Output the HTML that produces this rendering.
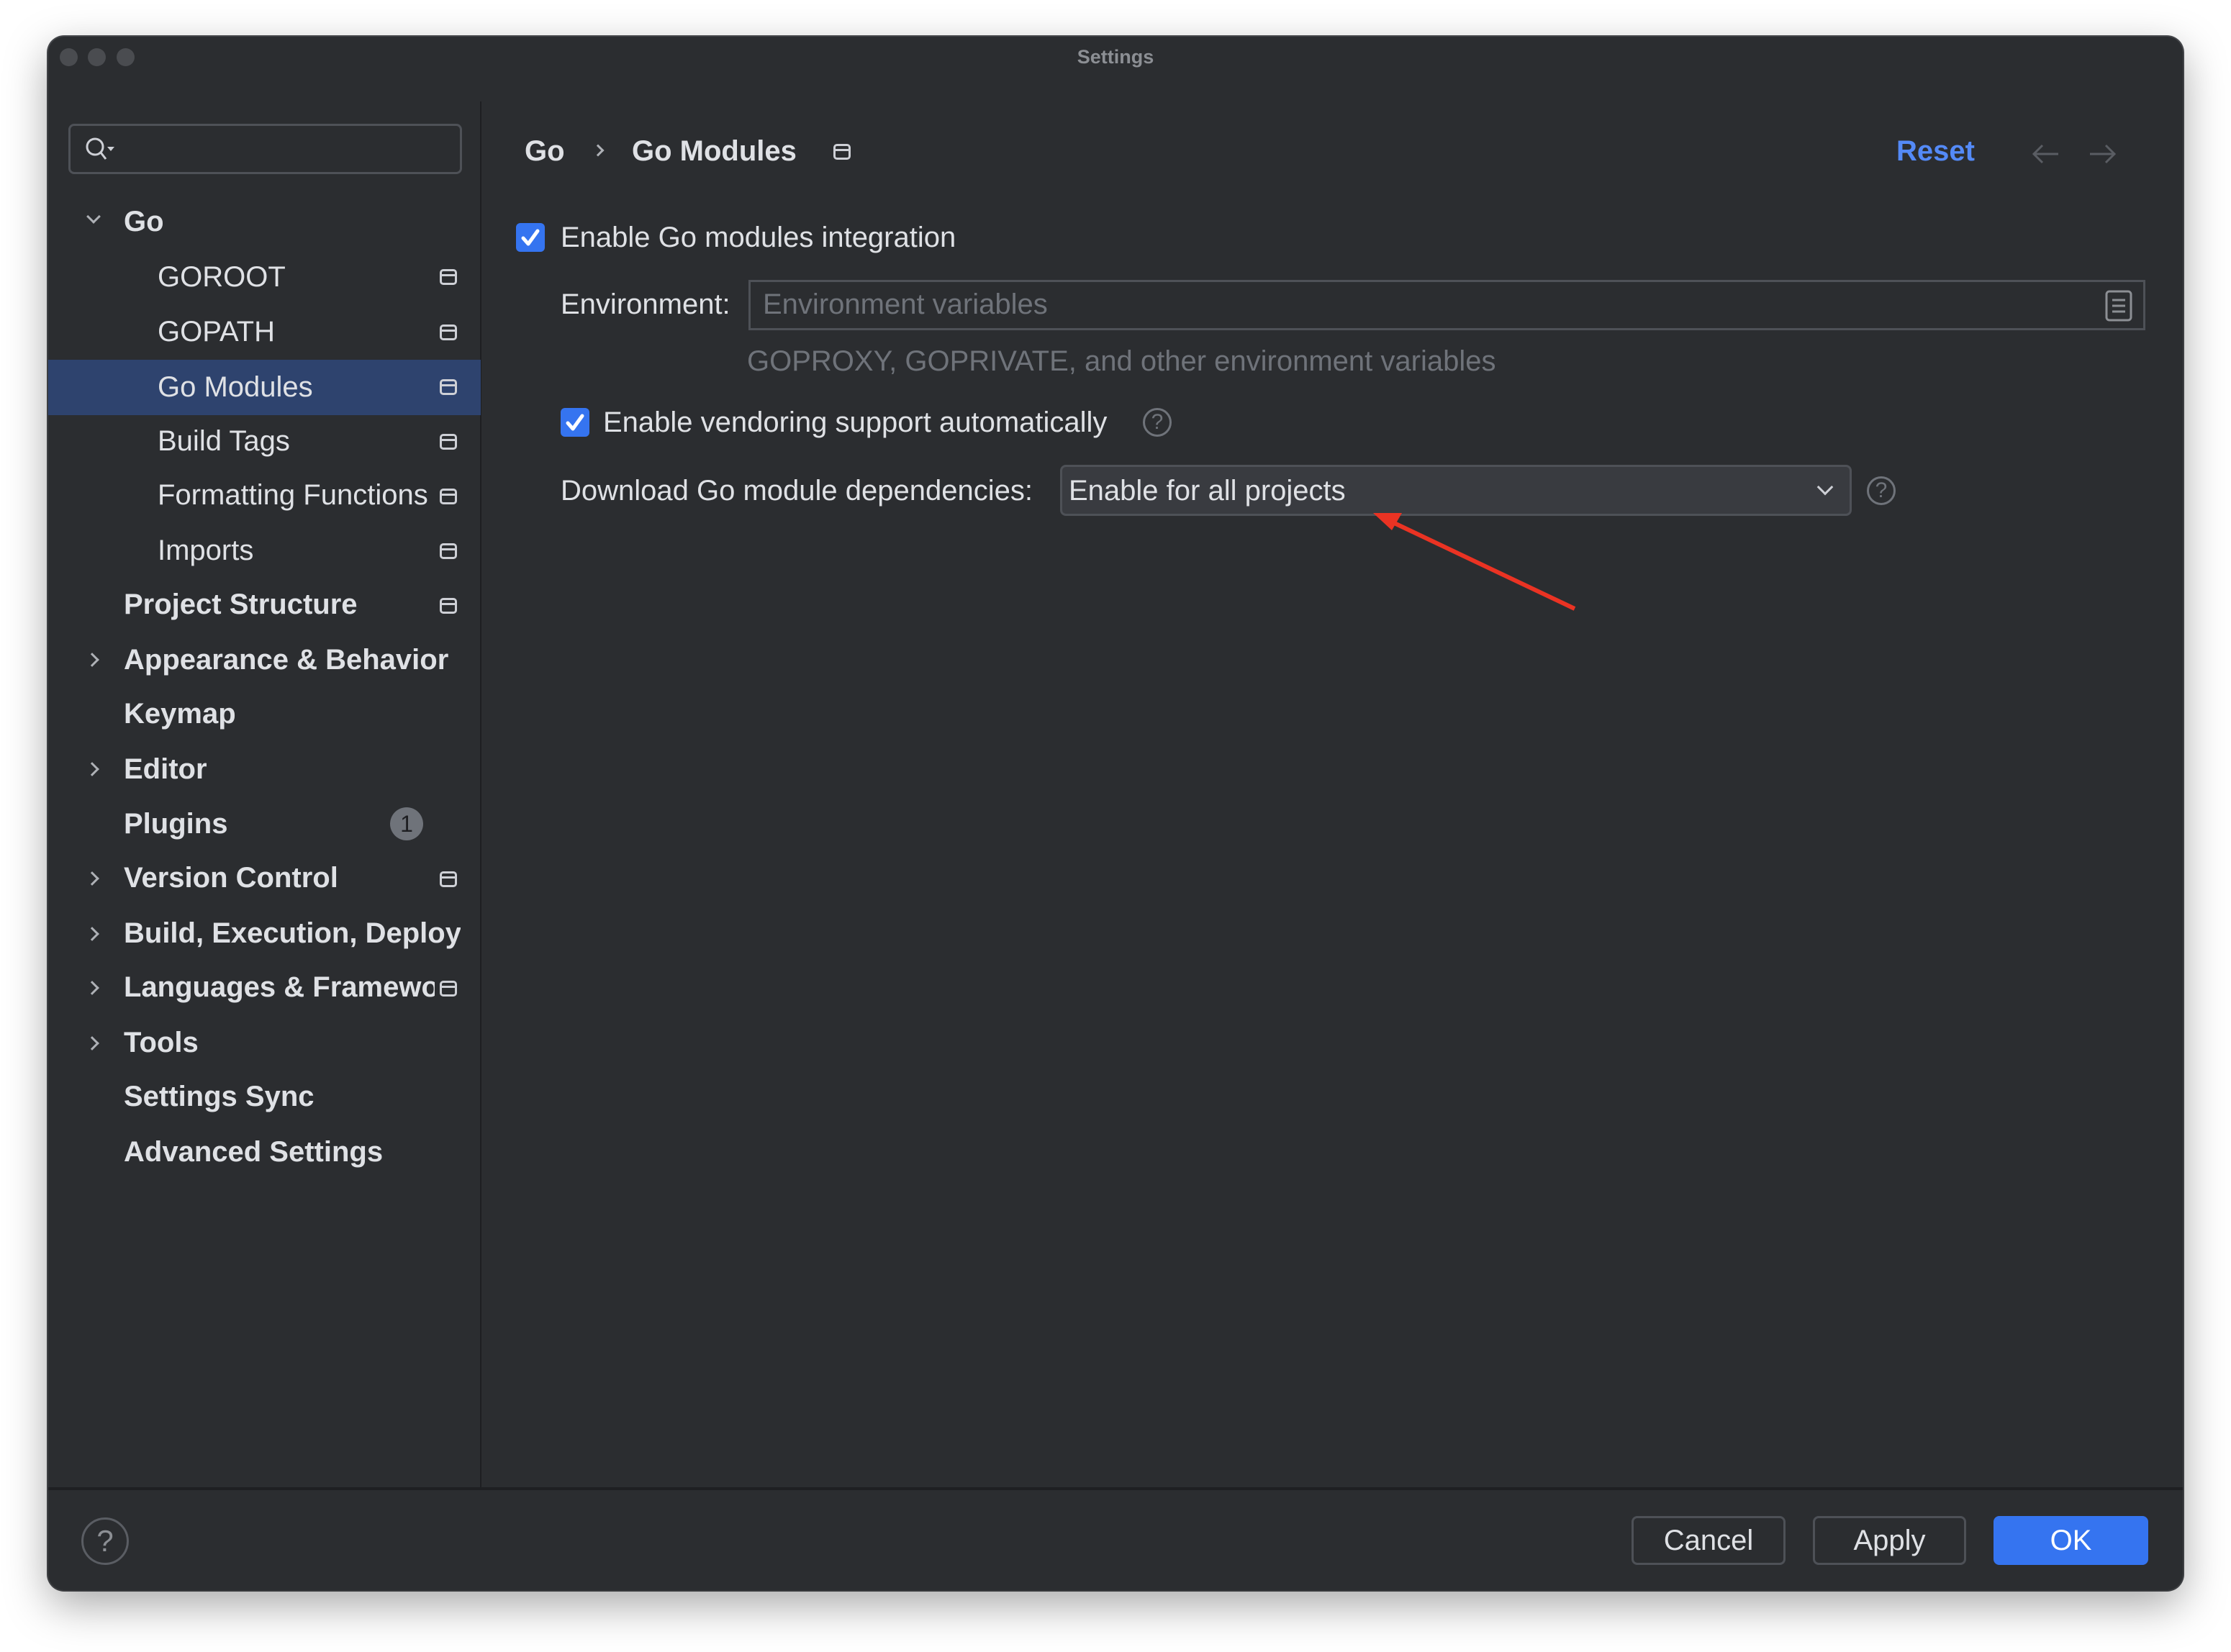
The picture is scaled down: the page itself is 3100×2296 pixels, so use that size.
<!DOCTYPE html>
<html><head><meta charset="utf-8"><style>
*{margin:0;padding:0;box-sizing:border-box}
body{width:3100px;height:2296px;background:#fff;position:relative;overflow:hidden;font-family:"Liberation Sans",sans-serif;color:#dfe1e5}
.win{position:absolute;left:67px;top:51px;width:2966px;height:2159px;background:#2b2d30;border-radius:22px;box-shadow:0 20px 60px rgba(0,0,0,.35),0 0 0 2px #4a4c50;overflow:hidden}
.a{position:absolute;white-space:nowrap}
.t{font-size:40px;line-height:50px}
.b{font-weight:bold}
.dot{position:absolute;top:16px;width:25px;height:25px;border-radius:50%;background:#4a4c50}
.ico{position:absolute;width:24px;height:22px;border:3px solid #ced0d6;border-radius:5px}
.ico:after{content:"";position:absolute;left:0;right:0;top:4px;border-top:3px solid #ced0d6}
.chev{position:absolute;width:14px;height:14px;border-right:3px solid #aeb1b6;border-bottom:3px solid #aeb1b6}
.cb{position:absolute;width:40px;height:40px;background:#3574f0;border-radius:6px}
.cb svg{position:absolute;left:0;top:0}
.help{position:absolute;width:40px;height:40px;border:3px solid #6f737a;border-radius:50%;color:#6f737a;font-size:30px;line-height:34px;text-align:center}
.btn{position:absolute;top:2056px;height:68px;border:3px solid #4e5157;border-radius:8px;font-size:40px;line-height:62px;text-align:center;color:#dfe1e5}
</style></head><body>
<div class="win">
<div class="dot" style="left:16px"></div><div class="dot" style="left:55px"></div><div class="dot" style="left:95px"></div>
<div class="a b" style="left:0;width:2966px;text-align:center;top:12px;font-size:27px;line-height:32px;color:#8c8f94">Settings</div>
<div style="position:absolute;left:600px;top:90px;width:2px;height:1927px;background:#1e1f22"></div>
<div style="position:absolute;left:0;top:2016px;width:2966px;height:4px;background:#1e1f22"></div>
<!-- search -->
<div style="position:absolute;left:28px;top:121px;width:547px;height:70px;border:3px solid #4e5157;border-radius:8px"></div>
<svg class="a" style="left:50px;top:138px" width="50" height="40" viewBox="0 0 50 40"><circle cx="15" cy="15" r="11" fill="none" stroke="#ced0d6" stroke-width="3"/><line x1="23" y1="23" x2="30" y2="32" stroke="#ced0d6" stroke-width="3"/><path d="M32 15h10l-5 6z" fill="#ced0d6"/></svg>
<!-- tree -->
<div style="position:absolute;left:0;top:449px;width:601px;height:77px;background:#2e436e"></div>
<div class="chev" style="left:56px;top:243px;transform:rotate(45deg)"></div>
<div class="a t b" style="left:105px;top:232px">Go</div>
<div class="a t" style="left:152px;top:309px">GOROOT</div><div class="ico" style="left:544px;top:323px"></div>
<div class="a t" style="left:152px;top:385px">GOPATH</div><div class="ico" style="left:544px;top:400px"></div>
<div class="a t" style="left:152px;top:462px">Go Modules</div><div class="ico" style="left:544px;top:476px"></div>
<div class="a t" style="left:152px;top:537px">Build Tags</div><div class="ico" style="left:544px;top:552px"></div>
<div class="a t" style="left:152px;top:612px;width:380px;overflow:hidden">Formatting Functions</div><div class="ico" style="left:544px;top:628px"></div>
<div class="a t" style="left:152px;top:689px">Imports</div><div class="ico" style="left:544px;top:704px"></div>
<div class="a t b" style="left:105px;top:764px">Project Structure</div><div class="ico" style="left:544px;top:780px"></div>
<div class="chev" style="left:54px;top:859px;transform:rotate(-45deg)"></div>
<div class="a t b" style="left:105px;top:841px">Appearance &amp; Behavior</div>
<div class="a t b" style="left:105px;top:916px">Keymap</div>
<div class="chev" style="left:54px;top:1011px;transform:rotate(-45deg)"></div>
<div class="a t b" style="left:105px;top:993px">Editor</div>
<div class="a t b" style="left:105px;top:1069px">Plugins</div>
<div style="position:absolute;left:475px;top:1071px;width:46px;height:46px;border-radius:50%;background:#6f737a;color:#1e1f22;font-size:32px;line-height:46px;text-align:center">1</div>
<div class="chev" style="left:54px;top:1163px;transform:rotate(-45deg)"></div>
<div class="a t b" style="left:105px;top:1144px">Version Control</div><div class="ico" style="left:544px;top:1160px"></div>
<div class="chev" style="left:54px;top:1240px;transform:rotate(-45deg)"></div>
<div class="a t b" style="left:105px;top:1221px;width:468px;overflow:hidden">Build, Execution, Deployment</div>
<div class="chev" style="left:54px;top:1315px;transform:rotate(-45deg)"></div>
<div class="a t b" style="left:105px;top:1296px;width:432px;overflow:hidden">Languages &amp; Frameworks</div><div class="ico" style="left:544px;top:1312px"></div>
<div class="chev" style="left:54px;top:1392px;transform:rotate(-45deg)"></div>
<div class="a t b" style="left:105px;top:1373px">Tools</div>
<div class="a t b" style="left:105px;top:1448px">Settings Sync</div>
<div class="a t b" style="left:105px;top:1525px">Advanced Settings</div>
<!-- right -->
<div class="a t b" style="left:662px;top:134px">Go</div>
<div class="chev" style="left:758px;top:152px;width:12px;height:12px;transform:rotate(-45deg)"></div>
<div class="a t b" style="left:811px;top:134px">Go Modules</div>
<div class="ico" style="left:1091px;top:149px"></div>
<div class="a t b" style="left:2568px;top:134px;color:#548af7">Reset</div>
<svg class="a" style="left:2755px;top:143px" width="160" height="40" viewBox="0 0 160 40"><path d="M38 20H4M16 8L4 20l12 12" fill="none" stroke="#5a5d63" stroke-width="3"/><path d="M82 20h34M104 8l12 12-12 12" fill="none" stroke="#5a5d63" stroke-width="3"/></svg>
<div class="cb" style="left:650px;top:259px"><svg width="40" height="40"><path d="M10 21l7 8 13-18" fill="none" stroke="#fff" stroke-width="5" stroke-linecap="round" stroke-linejoin="round"/></svg></div>
<div class="a t" style="left:712px;top:254px">Enable Go modules integration</div>
<div class="a t" style="left:712px;top:347px">Environment:</div>
<div style="position:absolute;left:973px;top:338px;width:1941px;height:70px;border:3px solid #4e5157"></div>
<div class="a t" style="left:993px;top:347px;color:#6f737a">Environment variables</div>
<svg class="a" style="left:2857px;top:351px" width="40" height="46" viewBox="0 0 40 46"><rect x="3" y="3" width="34" height="40" rx="4" fill="none" stroke="#8c8f94" stroke-width="3"/><path d="M11 15h18M11 23h18M11 31h18" stroke="#8c8f94" stroke-width="3"/></svg>
<div class="a t" style="left:971px;top:426px;color:#6f737a">GOPROXY, GOPRIVATE, and other environment variables</div>
<div class="cb" style="left:712px;top:516px"><svg width="40" height="40"><path d="M10 21l7 8 13-18" fill="none" stroke="#fff" stroke-width="5" stroke-linecap="round" stroke-linejoin="round"/></svg></div>
<div class="a t" style="left:771px;top:511px">Enable vendoring support automatically</div>
<div class="help" style="left:1521px;top:516px">?</div>
<div class="a t" style="left:712px;top:606px">Download Go module dependencies:</div>
<div style="position:absolute;left:1406px;top:595px;width:1100px;height:71px;border:3px solid #4e5157;border-radius:8px;background:#393b40"></div>
<div class="a t" style="left:1418px;top:606px">Enable for all projects</div>
<div class="chev" style="left:2461px;top:618px;width:16px;height:16px;transform:rotate(45deg);border-color:#ced0d6"></div>
<div class="help" style="left:2527px;top:611px">?</div>
<svg class="a" style="left:0;top:0" width="2966" height="2000"><path d="M2121 795L1862 672" stroke="#ea3323" stroke-width="6"/><path d="M1841 662l40 0-14 24z" fill="#ea3323"/></svg>
<!-- footer -->
<div class="help" style="left:46px;top:2058px;width:66px;height:66px;line-height:60px;font-size:42px;color:#8c8f94;border-color:#5a5d63">?</div>
<div class="btn" style="left:2200px;width:214px">Cancel</div>
<div class="btn" style="left:2452px;width:213px">Apply</div>
<div class="btn" style="left:2703px;width:215px;background:#3574f0;border-color:#3574f0;color:#fff">OK</div>
</div>
</body></html>
